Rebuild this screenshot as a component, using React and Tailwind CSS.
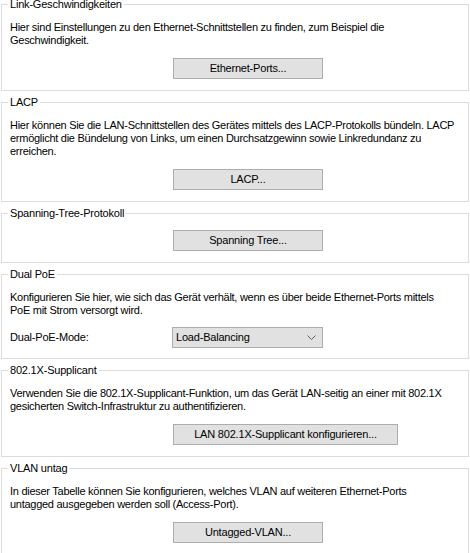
import React from "react";

const font = { fontFamily: '"Liberation Sans", Arial, sans-serif' };

function Group({ title, children }) {
  return (
    <fieldset className="mx-px border border-[#dcdcdc] min-w-0">
      <legend className="ml-[6px] px-[2px] text-[11px] leading-[13px] tracking-[-0.2px] text-black">{title}</legend>
      <div className="px-[8px] pt-[10px] pb-[11px]">{children}</div>
    </fieldset>
  );
}

function Desc({ children, mb = "mb-[11px]" }) {
  return (
    <p className={`text-[11px] leading-[13px] tracking-[-0.27px] whitespace-nowrap text-black ${mb}`}>{children}</p>
  );
}

function Btn({ children, wide }) {
  return (
    <div className="pl-[163px]">
      <button
        className={`${wide ? "w-[225px]" : "w-[150px]"} h-[21px] bg-[#e1e1e1] border border-[#adadad] text-[11px] leading-[13px] tracking-[-0.2px] text-black flex items-center justify-center`}
      >
        {children}
      </button>
    </div>
  );
}

export default function App() {
  return (
    <div className="w-[470px] h-[553px] overflow-hidden bg-white" style={font}>
      <div className="mt-[-2px] flex flex-col gap-[5px]">
        <Group title="Link-Geschwindigkeiten">
          <Desc>
            Hier sind Einstellungen zu den Ethernet-Schnittstellen zu finden, zum Beispiel die
            <br />
            Geschwindigkeit.
          </Desc>
          <Btn>Ethernet-Ports...</Btn>
        </Group>
        <Group title="LACP">
          <Desc>
            Hier können Sie die LAN-Schnittstellen des Gerätes mittels des LACP-Protokolls bündeln. LACP
            <br />
            ermöglicht die Bündelung von Links, um einen Durchsatzgewinn sowie Linkredundanz zu
            <br />
            erreichen.
          </Desc>
          <Btn>LACP...</Btn>
        </Group>
        <Group title="Spanning-Tree-Protokoll">
          <Btn>Spanning Tree...</Btn>
        </Group>
        <Group title="Dual PoE">
          <Desc mb="mb-[10px]">
            Konfigurieren Sie hier, wie sich das Gerät verhält, wenn es über beide Ethernet-Ports mittels
            <br />
            PoE mit Strom versorgt wird.
          </Desc>
          <div className="flex items-center mb-[-1px]">
            <span className="w-[162px] text-[11px] leading-[13px] tracking-[-0.2px] text-black">Dual-PoE-Mode:</span>
            <div className="w-[151px] h-[21px] bg-[#e1e1e1] border border-[#adadad] flex items-center justify-between pl-[3px] pr-[6px]">
              <span className="text-[11px] leading-[13px] tracking-[-0.2px] text-black">Load-Balancing</span>
              <svg width="9" height="5" viewBox="0 0 9 5" className="block">
                <path d="M0.5 0.5 L4.5 4.5 L8.5 0.5" fill="none" stroke="#606060" strokeWidth="1" />
              </svg>
            </div>
          </div>
        </Group>
        <Group title="802.1X-Supplicant">
          <Desc>
            Verwenden Sie die 802.1X-Supplicant-Funktion, um das Gerät LAN-seitig an einer mit 802.1X
            <br />
            gesicherten Switch-Infrastruktur zu authentifizieren.
          </Desc>
          <Btn wide>LAN 802.1X-Supplicant konfigurieren...</Btn>
        </Group>
        <Group title="VLAN untag">
          <Desc>
            In dieser Tabelle können Sie konfigurieren, welches VLAN auf weiteren Ethernet-Ports
            <br />
            untagged ausgegeben werden soll (Access-Port).
          </Desc>
          <Btn>Untagged-VLAN...</Btn>
        </Group>
      </div>
    </div>
  );
}
